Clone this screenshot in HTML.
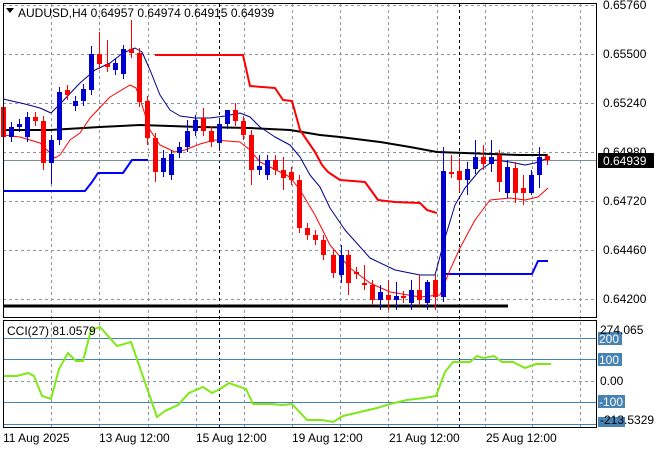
<!DOCTYPE html><html><head><style>
body{margin:0;background:#fff;width:660px;height:450px;overflow:hidden}
svg{display:block;font-family:"Liberation Sans",sans-serif;font-size:12px}
</style></head><body>
<svg id="s" width="660" height="450" xmlns="http://www.w3.org/2000/svg">
<rect width="660" height="450" fill="#fff"/>
<g stroke="#8c96a0" stroke-dasharray="3,3" stroke-width="1">
<line x1="3" y1="5.5" x2="596" y2="5.5"/><line x1="3" y1="54.5" x2="596" y2="54.5"/><line x1="3" y1="103.5" x2="596" y2="103.5"/><line x1="3" y1="152.5" x2="596" y2="152.5"/><line x1="3" y1="201.5" x2="596" y2="201.5"/><line x1="3" y1="250.5" x2="596" y2="250.5"/><line x1="3" y1="299.5" x2="596" y2="299.5"/>
<line x1="3" y1="381.5" x2="596" y2="381.5"/>
</g>
<g id="vg" stroke="#8c96a0" stroke-dasharray="3,3"></g>
<line x1="3" y1="160.5" x2="596" y2="160.5" stroke="#7f8c99"/>
<g stroke="#4682b4"><line x1="3" y1="338.5" x2="596" y2="338.5"/><line x1="3" y1="359.5" x2="596" y2="359.5"/><line x1="3" y1="402.5" x2="596" y2="402.5"/><line x1="3" y1="424.5" x2="596" y2="424.5"/></g>
<g fill="none" stroke-linejoin="round">
<polyline stroke="#000" stroke-width="2" points="3,130 50,130 100,127 140,125 200,127 250,128 290,130 320,135 340,137 380,142 410,147 437,152 520,155 548,155"/>
<polyline stroke="#f00" stroke-width="2" points="155,55 243,55 250,86 275,88 283,100 292,101 300,130 315,152 322,165 328,172 340,180 365,182 378,200 395,202 420,203 427,210 437,213"/>
<polyline stroke="#00f" stroke-width="2" points="3,191 85,191 92,182 98,173 123,173 132,160 148,160"/>
<polyline stroke="#00f" stroke-width="2" points="443,274 532,274 538,261 548,261"/>
<polyline stroke="#000" stroke-width="3" points="3,306 508,306"/>
<polyline stroke="#00008b" stroke-width="1" points="3,99 25,104 40,108 51,113 60,104 80,83 95,70 110,63 123,53 135,48 142,52 150,70 160,95 170,110 180,116 195,118 210,118 225,116 240,113 250,117 260,127 275,137 290,145 300,157 310,175 320,187 330,208 345,230 370,258 395,270 420,275 435,275 445,238 455,205 465,188 480,170 495,160 510,162 525,165 535,163 548,158"/>
<polyline stroke="#f00" stroke-width="1" points="3,135 20,137 40,143 55,158 60,155 70,140 80,133 90,118 110,97 130,85 136,88 142,105 150,130 160,145 175,152 185,150 200,144 215,140 240,142 250,150 260,162 280,172 290,177 300,190 315,215 330,245 350,268 370,283 390,292 420,297 440,295 450,270 460,248 475,220 490,200 510,198 525,200 538,197 548,188"/>
</g>
<g id="cd"></g>
<polyline fill="none" stroke="#7fe817" stroke-width="2" points="3,376 17,376 28,373 34,376 42,396 51,399 59,369 68,353 76,361 83,361 91,330 100,327 117,346 131,342 157,417 165,411 178,405 189,393 203,387 212,393 220,389 229,383 246,389 253,404 271,404 282,405 292,404 307,420 322,420 333,422 343,416 360,412 377,408 390,404 407,400 424,398 436,396 445,372 453,362 470,362 477,356 483,358 494,356 502,362 513,362 525,368 536,364 551,364"/>
<g fill="none" stroke="#000"><rect x="3.5" y="3.5" width="593" height="314"/><rect x="3.5" y="320.5" width="593" height="107"/></g>
<g fill="#000">
<path d="M6 8 L14 8 L10 13Z"/>
<text x="18" y="17">AUDUSD,H4  0.64957 0.64974 0.64915 0.64939</text>
<text x="7" y="335">CCI(27) 81.0579</text>
<text x="603" y="9">0.65760</text><text x="603" y="58">0.65500</text><text x="603" y="107">0.65240</text><text x="603" y="156">0.64980</text><text x="603" y="205">0.64720</text><text x="603" y="254">0.64460</text><text x="603" y="303">0.64200</text>
</g>
<rect x="598" y="153" width="56" height="15" fill="#000"/><text x="603" y="165" fill="#fff">0.64939</text>
<g fill="#4682b4"><rect x="598" y="332" width="24" height="13"/><rect x="598" y="353" width="24" height="13"/><rect x="598" y="395" width="27" height="13"/><rect x="598" y="417" width="27" height="10"/></g>
<g fill="#fff"><text x="599" y="343">200</text><text x="599" y="364">100</text><text x="599" y="406">-100</text></g>
<g fill="#000"><text x="600" y="334">274.065</text><text x="600" y="385">0.00</text><text x="600" y="424">-213.5329</text>
<text x="3" y="442">11 Aug 2025</text><text x="99" y="442">13 Aug 12:00</text><text x="196" y="442">15 Aug 12:00</text><text x="292" y="442">19 Aug 12:00</text><text x="389" y="442">21 Aug 12:00</text><text x="486" y="442">25 Aug 12:00</text></g>
</svg>
<script>
var NS="http://www.w3.org/2000/svg",vg=document.getElementById('vg');
[51,99,148,196,244,292,340,388,437,485,532,580,219,459].forEach(function(x,i){var l=document.createElementNS(NS,'line');l.setAttribute('x1',x+.5);l.setAttribute('x2',x+.5);l.setAttribute('y1',4);l.setAttribute('y2',427);if(i>11){l.setAttribute('stroke','#000');}vg.appendChild(l);});
var D=[[3,107,137,'r'],[11,127,137,'b'],[19,124,127,'b'],[27,117,137,'b'],[35,117,121,'r'],[43,121,163,'r',0,170],[51,140,163,'b',0,184],[59,92,140,'b'],[67,90,95,'r'],[75,101,106,'b'],[83,89,101,'b'],[91,54,90,'b',46],[99,54,64,'r',32],[107,64,67,'r',40],[115,63,70,'b'],[123,49,74,'b',45],[131,49,53,'r',20],[139,53,102,'r'],[147,101,138,'r',0,145],[155,138,172,'r',0,182],[163,158,172,'b',150],[171,154,175,'b',150],[179,147,153,'b'],[187,131,147,'b',120],[195,120,131,'b'],[203,118,131,'r',108],[211,131,142,'r'],[219,124,143,'b'],[227,110,124,'b',110],[235,110,121,'r',103],[243,121,135,'r'],[251,135,170,'r',0,185],[259,166,170,'b',155],[267,160,175,'b'],[275,160,170,'r',155],[283,170,178,'r',157,190],[291,172,180,'r'],[299,180,228,'r'],[307,228,235,'r'],[315,235,240,'r'],[323,240,255,'r'],[333,255,273,'r'],[341,255,275,'b',245,283],[348,255,283,'r',0,295],[356,272,274,'r'],[364,283,285,'r',265],[372,285,300,'r'],[380,292,300,'b',285,310],[388,295,300,'r',280,310],[396,296,300,'b',282,310],[403,296,298,'r'],[411,290,303,'b',280,310],[419,290,300,'r',275,306],[427,282,303,'b',280,310],[435,280,297,'r',0,310],[443,171,297,'b',147],[451,172,173,'r',155],[459,171,180,'r',158,192],[467,169,180,'b',162,195],[475,157,169,'b',140],[483,157,164,'r',145,170],[491,157,164,'b',140,172],[499,155,182,'r',0,192],[507,167,193,'b',160,198],[515,168,193,'r',162,203],[523,188,193,'r',175,205],[531,175,193,'b',0,195],[539,157,175,'b',147,188],[547,156,160,'r',154,165]];
var cd=document.getElementById('cd');
D.forEach(function(c){var col=c[3]=='r'?'#f00':'#00008b';if(c[3]=='b')col='#0000cd';var t=c[4]||c[1]-5,b=c[5]||c[2]+5;
var l=document.createElementNS(NS,'line');l.setAttribute('x1',c[0]+.5);l.setAttribute('x2',c[0]+.5);l.setAttribute('y1',t);l.setAttribute('y2',b);l.setAttribute('stroke',col);cd.appendChild(l);
var r=document.createElementNS(NS,'rect');r.setAttribute('x',c[0]-2);r.setAttribute('y',c[1]);r.setAttribute('width',5);r.setAttribute('height',Math.max(2,c[2]-c[1]));r.setAttribute('fill',col);cd.appendChild(r);});
</script>
</body></html>
